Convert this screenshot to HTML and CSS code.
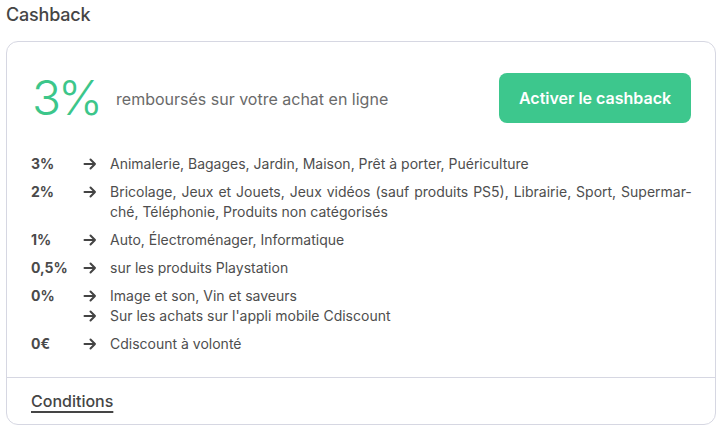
FILE: index.html
```html
<!DOCTYPE html>
<html lang="fr">
<head>
<meta charset="utf-8">
<link rel="stylesheet" href="styles.css">
</head>
<body>
<h2 class="title">Cashback</h2>
<div class="card">
  <div class="card-body">
    <div class="head">
      <div class="rate">3%</div>
      <div class="rate-text">remboursés sur votre achat en ligne</div>
      <button class="btn">Activer le cashback</button>
    </div>
    <ul class="list">
      <li class="row">
        <span class="pct">3%</span>
        <div class="items">
          <div class="item"><svg class="arrow" viewBox="0 0 14 14"><path d="M1.5 7h10.5M7.5 2.5L12 7l-4.5 4.5"/></svg><span>Animalerie, Bagages, Jardin, Maison, Prêt à porter, Puériculture</span></div>
        </div>
      </li>
      <li class="row">
        <span class="pct">2%</span>
        <div class="items">
          <div class="item"><svg class="arrow" viewBox="0 0 14 14"><path d="M1.5 7h10.5M7.5 2.5L12 7l-4.5 4.5"/></svg><span class="just">Bricolage, Jeux et Jouets, Jeux vidéos (sauf produits PS5), Librairie, Sport, Supermar&shy;ché, Téléphonie, Produits non catégorisés</span></div>
        </div>
      </li>
      <li class="row">
        <span class="pct">1%</span>
        <div class="items">
          <div class="item"><svg class="arrow" viewBox="0 0 14 14"><path d="M1.5 7h10.5M7.5 2.5L12 7l-4.5 4.5"/></svg><span>Auto, Électroménager, Informatique</span></div>
        </div>
      </li>
      <li class="row">
        <span class="pct">0,5%</span>
        <div class="items">
          <div class="item"><svg class="arrow" viewBox="0 0 14 14"><path d="M1.5 7h10.5M7.5 2.5L12 7l-4.5 4.5"/></svg><span>sur les produits Playstation</span></div>
        </div>
      </li>
      <li class="row">
        <span class="pct">0%</span>
        <div class="items">
          <div class="item"><svg class="arrow" viewBox="0 0 14 14"><path d="M1.5 7h10.5M7.5 2.5L12 7l-4.5 4.5"/></svg><span>Image et son, Vin et saveurs</span></div>
          <div class="item"><svg class="arrow" viewBox="0 0 14 14"><path d="M1.5 7h10.5M7.5 2.5L12 7l-4.5 4.5"/></svg><span>Sur les achats sur l'appli mobile Cdiscount</span></div>
        </div>
      </li>
      <li class="row">
        <span class="pct">0€</span>
        <div class="items">
          <div class="item"><svg class="arrow" viewBox="0 0 14 14"><path d="M1.5 7h10.5M7.5 2.5L12 7l-4.5 4.5"/></svg><span>Cdiscount à volonté</span></div>
        </div>
      </li>
    </ul>
  </div>
  <div class="card-foot">
    <a class="cond" href="#">Conditions</a>
  </div>
</div>
</body>
</html>
```

FILE: styles.css
```css
* { box-sizing: border-box; }
html, body { margin: 0; padding: 0; background: #fff; }
body {
  font-family: Inter, "Noto Sans", sans-serif;
  color: #444;
  padding: 4px 10px 0 6px;
}
.title {
  margin: 0;
  font-size: 18px;
  font-weight: 500;
  line-height: 22px;
  color: #454545;
  letter-spacing: -0.2px;
}
.card {
  margin-top: 15px;
  width: 710px;
  border: 1px solid #d6d7e2;
  border-radius: 12px;
}
.card-body {
  padding: 31px 24px 23px 24px;
}
.head {
  display: flex;
  align-items: center;
  height: 50px;
}
.rate {
  font-size: 48px;
  font-weight: 300;
  color: #3cc68a;
  line-height: 50px;
  margin-left: 1px;
  letter-spacing: -3px;
}
.rate-text {
  margin-left: 16px;
  font-size: 16px;
  color: #6a6a6a;
  flex: 1;
  padding-top: 2px;
}
.btn {
  width: 192px;
  height: 50px;
  border: none;
  border-radius: 8px;
  background: #3dc78d;
  color: #fff;
  font-family: inherit;
  font-size: 16px;
  font-weight: 600;
  padding: 0;
}
.list {
  list-style: none;
  margin: 31px 0 0 0;
  padding: 0;
  display: flex;
  flex-direction: column;
  gap: 8px;
}
.row {
  display: flex;
  font-size: 14px;
  line-height: 20px;
}
.pct {
  width: 52px;
  flex: none;
  font-weight: 700;
  color: #4a4a4a;
}
.items { flex: 1; }
.item {
  display: flex;
  align-items: flex-start;
  color: #4e4e4e;
}
.item span { flex: 1; }
.just { text-align: justify; hyphens: manual; }
.arrow {
  width: 14px;
  height: 14px;
  margin: 3px 13px 0 0;
  flex: none;
  fill: none;
  stroke: #444;
  stroke-width: 2;
  stroke-linecap: round;
  stroke-linejoin: round;
}
.card-foot {
  border-top: 1px solid #d6d7e2;
  padding: 13px 24px 12px 24px;
  height: 47px;
}
.cond {
  font-size: 16px;
  font-weight: 500;
  color: #454545;
  text-decoration: underline;
  text-decoration-thickness: 2px;
  text-underline-offset: 4px;
  line-height: 20px;
}
```
